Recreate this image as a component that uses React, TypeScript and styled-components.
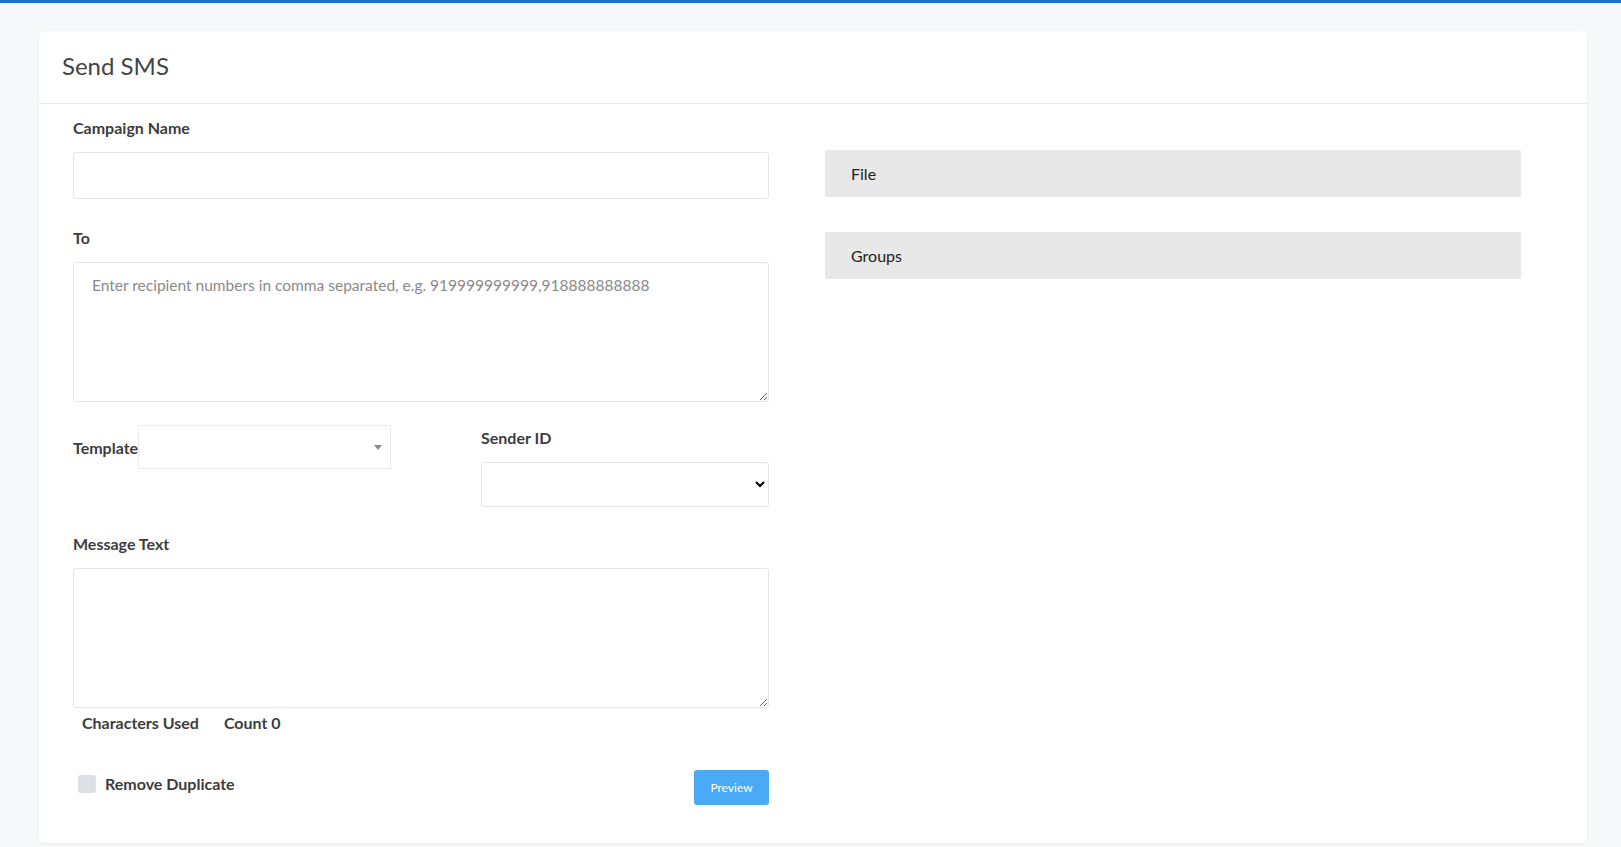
import React from "react";
import styled, { createGlobalStyle } from "styled-components";

const GlobalStyle = createGlobalStyle`
  html, body { margin: 0; padding: 0; }
  body {
    background: #f7f8fa;
    font-family: Lato, "Open Sans", sans-serif;
    color: #3d3d3d;
  }
  * { box-sizing: border-box; }
`;

const TopBar = styled.div`
  height: 3px;
  background: #1b6bd6;
`;

const Page = styled.div`
  padding: 28px 34px 4px 39px;
`;

const Card = styled.div`
  background: #fff;
  border-radius: 5px;
  box-shadow: 0 1px 3px rgba(0, 0, 0, 0.06);
  min-height: 812px;
`;

const Header = styled.div`
  height: 73px;
  border-bottom: 1px solid #e9e9ec;
  padding: 20px 23px;
`;

const Title = styled.h3`
  margin: 0;
  font-size: 24px;
  font-weight: 400;
  color: #444;
`;

const Body = styled.div`
  display: flex;
  padding: 14px 34px 30px;
  gap: 56px;
`;

const LeftCol = styled.div`
  width: 696px;
  display: flex;
  flex-direction: column;
`;

const RightCol = styled.div`
  width: 696px;
  padding-top: 32px;
  display: flex;
  flex-direction: column;
  gap: 35px;
`;

const Label = styled.label<{ $gap?: number }>`
  display: block;
  font-size: 16px;
  font-weight: 700;
  color: #3d3d3d;
  margin-bottom: ${(p) => p.$gap ?? 15}px;
`;

const Field = styled.div<{ $mb?: number }>`
  margin-bottom: ${(p) => p.$mb ?? 0}px;
`;

const Input = styled.input`
  display: block;
  width: 100%;
  height: 47px;
  border: 1px solid #e4e4ea;
  border-radius: 3px;
  font: inherit;
`;

const TextArea = styled.textarea`
  display: block;
  width: 100%;
  height: 140px;
  border: 1px solid #e4e4ea;
  border-radius: 3px;
  padding: 13px 18px;
  font-family: Lato, sans-serif;
  font-size: 15.5px;
  color: #444;
  resize: vertical;
  &::placeholder { color: #8a8a8a; }
`;

const Row = styled.div`
  display: flex;
  align-items: flex-start;
  margin: 23px 0 27px;
`;

const TemplateGroup = styled.div`
  display: flex;
  align-items: center;
  width: 408px;
`;

const FakeSelect = styled.div`
  width: 253px;
  height: 44px;
  border: 1px solid #ececf0;
  display: flex;
  align-items: center;
  justify-content: flex-end;
  padding-right: 8px;
  &::after {
    content: "";
    border-left: 4px solid transparent;
    border-right: 4px solid transparent;
    border-top: 5px solid #888;
  }
`;

const SenderGroup = styled.div`
  flex: 1;
  padding-top: 3px;
`;

const Select = styled.select`
  display: block;
  width: 100%;
  height: 45px;
  border: 1px solid #e4e4ea;
  border-radius: 3px;
  background: #fff;
  font: inherit;
`;

const Counter = styled.div`
  display: flex;
  gap: 25px;
  padding: 5px 9px 0;
  font-size: 16px;
  font-weight: 700;
  color: #3d3d3d;
`;

const Footer = styled.div`
  display: flex;
  justify-content: space-between;
  align-items: flex-end;
  margin-top: 38px;
`;

const Check = styled.label`
  display: flex;
  align-items: center;
  gap: 9px;
  padding-left: 5px;
  margin-bottom: 12px;
  font-size: 16px;
  font-weight: 700;
`;

const Box = styled.span`
  width: 18px;
  height: 18px;
  border-radius: 3px;
  background: #dde0e5;
`;

const Button = styled.button`
  width: 75px;
  height: 35px;
  border: none;
  border-radius: 3px;
  background: #4aaaf5;
  color: #fff;
  font-family: Lato, sans-serif;
  font-size: 12px;
`;

const Panel = styled.div`
  height: 47px;
  background: #e8e8e8;
  border-radius: 2px;
  display: flex;
  align-items: center;
  padding-left: 26px;
  font-size: 16px;
  color: #222;
`;

export default function App() {
  return (
    <>
      <GlobalStyle />
      <TopBar />
      <Page>
        <Card>
          <Header>
            <Title>Send SMS</Title>
          </Header>
          <Body>
            <LeftCol>
              <Field $mb={29}>
                <Label>Campaign Name</Label>
                <Input />
              </Field>
              <Field>
                <Label>To</Label>
                <TextArea placeholder="Enter recipient numbers in comma separated, e.g. 919999999999,918888888888" />
              </Field>
              <Row>
                <TemplateGroup>
                  <Label $gap={0}>Template</Label>
                  <FakeSelect />
                </TemplateGroup>
                <SenderGroup>
                  <Label>Sender ID</Label>
                  <Select>
                    <option></option>
                  </Select>
                </SenderGroup>
              </Row>
              <Field>
                <Label>Message Text</Label>
                <TextArea />
              </Field>
              <Counter>
                <span>Characters Used</span>
                <span>Count 0</span>
              </Counter>
              <Footer>
                <Check>
                  <Box />
                  Remove Duplicate
                </Check>
                <Button>Preview</Button>
              </Footer>
            </LeftCol>
            <RightCol>
              <Panel>File</Panel>
              <Panel>Groups</Panel>
            </RightCol>
          </Body>
        </Card>
      </Page>
    </>
  );
}
